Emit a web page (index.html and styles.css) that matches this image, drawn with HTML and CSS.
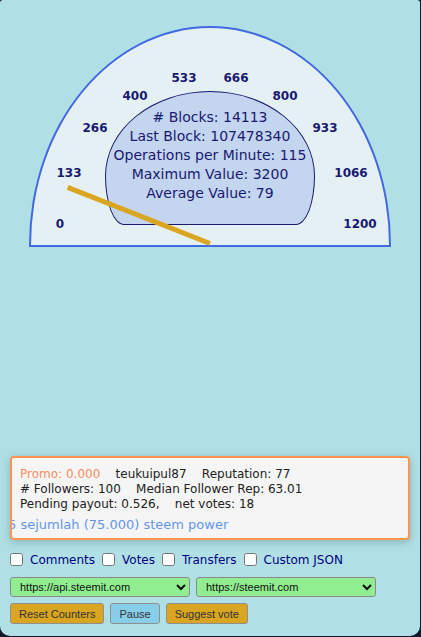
FILE: index.html
```html
<!DOCTYPE html>
<html lang="id">
<head>
<meta charset="utf-8">
<title>Steem Monitor</title>
<link rel="stylesheet" href="styles.css">
</head>
<body>
<div class="panel">
  <div class="gauge">
    <span class="tick" style="left:29px;top:196px">0</span>
    <span class="tick" style="left:38px;top:145px">133</span>
    <span class="tick" style="left:64px;top:100px">266</span>
    <span class="tick" style="left:104px;top:68px">400</span>
    <span class="tick" style="left:153px;top:50px">533</span>
    <span class="tick" style="left:205px;top:50px">666</span>
    <span class="tick" style="left:254px;top:68px">800</span>
    <span class="tick" style="left:294px;top:100px">933</span>
    <span class="tick" style="left:320px;top:145px">1066</span>
    <span class="tick" style="left:329px;top:196px">1200</span>
    <div class="dial">
      <div># Blocks: 14113</div>
      <div>Last Block: 107478340</div>
      <div>Operations per Minute: 115</div>
      <div>Maximum Value: 3200</div>
      <div>Average Value: 79</div>
    </div>
    <div class="needle" style="transform:rotate(21.5deg)"></div>
  </div>

  <div class="card">
    <div class="stats"><span class="promo">Promo: 0.000</span>    teukuipul87    Reputation: 77
# Followers: 100    Median Follower Rep: 63.01
Pending payout: 0.526,    net votes: 18</div>
    <div class="ticker"><span class="ticker-text">5 sejumlah (75.000) steem power</span></div>
  </div>

  <div class="filters">
    <label class="opt"><input type="checkbox"><span>Comments</span></label>
    <label class="opt"><input type="checkbox"><span>Votes</span></label>
    <label class="opt"><input type="checkbox"><span>Transfers</span></label>
    <label class="opt"><input type="checkbox"><span>Custom JSON</span></label>
  </div>

  <div class="nodes">
    <select class="node">
      <option>https://api.steemit.com</option>
    </select>
    <select class="node">
      <option>https://steemit.com</option>
    </select>
  </div>

  <div class="actions">
    <button class="btn gold">Reset Counters</button>
    <button class="btn sky">Pause</button>
    <button class="btn gold">Suggest vote</button>
  </div>
</div>
</body>
</html>
```

FILE: styles.css
```css
html, body {
  margin: 0;
  padding: 0;
  background: #171729;
}

.panel {
  box-sizing: border-box;
  width: 420px;
  height: 636px;
  padding: 0 6px;
  background: #b0e0e6;
  border-radius: 3px 3px 10px 10px;
  font-family: "DejaVu Sans", Verdana, sans-serif;
  overflow: hidden;
}

/* semicircular meter */
.gauge {
  position: relative;
  box-sizing: border-box;
  width: 362px;
  height: 221px;
  margin: 26px auto 0;
  background: #e4f0f3;
  border: 2px solid #4169e1;
  border-radius: 181px 181px 0 0 / 219px 219px 0 0;
}

.tick {
  position: absolute;
  transform: translate(-50%, -50%);
  font-size: 12px;
  line-height: 12px;
  font-weight: bold;
  color: #191970;
  white-space: nowrap;
}

.dial {
  position: absolute;
  left: 74px;
  top: 63px;
  box-sizing: border-box;
  width: 210px;
  height: 134px;
  padding-top: 16px;
  background: #c3d5ef;
  border: 1px solid #191970;
  border-radius: 105px 105px 19px 19px / 85px 85px 49px 49px;
  color: #191970;
  font-size: 14px;
  line-height: 19px;
  text-align: center;
  white-space: nowrap;
}

.needle {
  position: absolute;
  left: 26px;
  top: 213px;
  width: 153px;
  height: 5px;
  background: #daa520;
  transform-origin: right center;
}

/* account summary */
.card {
  margin: 209px 4px 0;
  padding: 9px 0 5px;
  background: #f5f5f5;
  border: 2px solid #fb9550;
  border-radius: 4px;
  box-shadow: 0 2px 8px rgba(40, 60, 70, 0.28);
}

.stats {
  padding: 0 8px;
  font-size: 12px;
  line-height: 15px;
  color: #222;
  white-space: pre;
}

.promo {
  color: #f88d5e;
}

.ticker {
  margin-top: 5px;
  overflow: hidden;
  font-size: 13px;
  line-height: 16px;
  color: #6495ed;
  white-space: nowrap;
}

.ticker-text {
  display: inline-block;
  margin-left: -4px;
}

/* operation filters */
.filters {
  display: flex;
  align-items: center;
  margin-top: 10px;
  font-size: 12px;
  color: #000080;
}

.opt {
  display: flex;
  align-items: center;
}

.opt input {
  width: 13px;
  height: 13px;
  margin: 3px 3px 3px 4px;
}

.opt span {
  margin: 0 3px 0 4px;
}

/* node pickers */
.nodes {
  display: flex;
  gap: 6px;
  margin: 8px 0 0 4px;
}

.node {
  box-sizing: border-box;
  width: 180px;
  height: 20px;
  margin: 0;
  padding: 0 2px 0 5px;
  background-color: #90ee90;
  border: 1px solid #8a8a8a;
  border-radius: 3px;
  font-family: "Liberation Sans", Arial, sans-serif;
  font-size: 11px;
  color: #111;
}

/* controls */
.actions {
  display: flex;
  gap: 6px;
  margin: 6px 0 0 4px;
}

.btn {
  box-sizing: border-box;
  height: 21px;
  margin: 0;
  padding: 0 8px;
  border: 1px solid #8f8f8f;
  border-radius: 3px;
  font-family: "Liberation Sans", Arial, sans-serif;
  font-size: 11px;
  color: #333;
}

.gold {
  background: #daa520;
}

.sky {
  background: #87ceeb;
}
```
